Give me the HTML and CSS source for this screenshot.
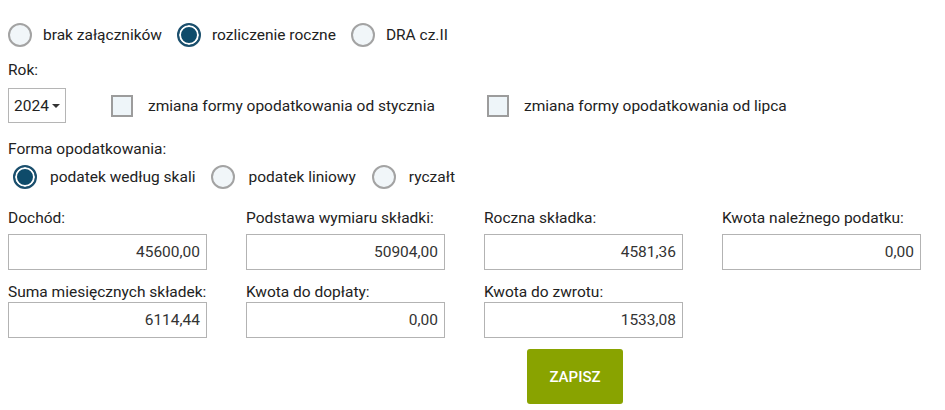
FILE: index.html
```html
<!DOCTYPE html>
<html>
    <head>
    <title>Rozliczenie roczne</title>
    <link rel="stylesheet" href="styles.css">
    </head>
    <body>
    <div id="form">
        <div class="choice-row top-row">
            <label class="choice"><span class="radio"></span>brak załączników</label>
            <label class="choice"><span class="radio on"></span>rozliczenie roczne</label>
            <label class="choice"><span class="radio"></span>DRA cz.II</label>
        </div>

        <div class="caption rok">Rok:</div>
        <div class="year-row">
            <div class="select">2024<span class="caret"></span></div>
            <label class="check first"><span class="box"></span>zmiana formy opodatkowania od stycznia</label>
            <label class="check"><span class="box"></span>zmiana formy opodatkowania od lipca</label>
        </div>

        <div class="caption forma">Forma opodatkowania:</div>
        <div class="choice-row tax-row">
            <label class="choice"><span class="radio on"></span>podatek według skali</label>
            <label class="choice"><span class="radio"></span>podatek liniowy</label>
            <label class="choice"><span class="radio"></span>ryczałt</label>
        </div>

        <div class="fields row1">
            <div class="field">
                <label>Dochód:</label>
                <div class="value">45600,00</div>
            </div>
            <div class="field">
                <label>Podstawa wymiaru składki:</label>
                <div class="value">50904,00</div>
            </div>
            <div class="field">
                <label>Roczna składka:</label>
                <div class="value">4581,36</div>
            </div>
            <div class="field">
                <label>Kwota należnego podatku:</label>
                <div class="value">0,00</div>
            </div>
        </div>
        <div class="fields row2">
            <div class="field">
                <label>Suma miesięcznych składek:</label>
                <div class="value">6114,44</div>
            </div>
            <div class="field">
                <label>Kwota do dopłaty:</label>
                <div class="value">0,00</div>
            </div>
            <div class="field">
                <label>Kwota do zwrotu:</label>
                <div class="value">1533,08</div>
            </div>
        </div>

        <div class="actions">
            <button class="save">ZAPISZ</button>
        </div>
    </div>
    </body>
</html>
```

FILE: styles.css
```css
body {
    margin: 0;
    font-family: Roboto, "Liberation Sans", sans-serif;
    font-size: 15.5px;
    color: #222;
    background: #fff;
}
#form {
    padding: 23px 8px 0 8px;
}
.choice-row {
    display: flex;
    align-items: center;
    height: 24px;
}
.choice {
    display: flex;
    align-items: center;
    margin-right: 15px;
}
.radio {
    box-sizing: border-box;
    width: 24px;
    height: 24px;
    border-radius: 50%;
    border: 2px solid #a3a3a3;
    background: #f1f6f9;
    margin-right: 11px;
}
.radio.on {
    border-color: #1b4f6d;
    background: #0e4b6a;
    box-shadow: inset 0 0 0 2px #fff;
}
.tax-row {
    margin-top: 7px;
    padding-left: 5px;
}
.tax-row .radio {
    margin-right: 13px;
}
.tax-row .choice {
    margin-right: 16px;
}
.caption {
    line-height: 18px;
}
.rok {
    margin-top: 14px;
}
.forma {
    margin-top: 17px;
}
.year-row {
    display: flex;
    align-items: center;
    margin-top: 9px;
    height: 35px;
}
.select {
    box-sizing: border-box;
    width: 58px;
    height: 35px;
    border: 1px solid #b5b5b5;
    padding-left: 5px;
    display: flex;
    align-items: center;
    color: #222;
}
.caret {
    width: 0;
    height: 0;
    border-left: 4px solid transparent;
    border-right: 4px solid transparent;
    border-top: 4px solid #333;
    margin-left: 3px;
}
.check {
    display: flex;
    align-items: center;
}
.check.first {
    margin-left: 45px;
    width: 376px;
}
.box {
    box-sizing: border-box;
    width: 22px;
    height: 22px;
    border: 2px solid #9c9c9c;
    background: #eef5f9;
    margin-right: 15px;
}
.fields {
    display: grid;
    grid-template-columns: repeat(4, 199px);
    column-gap: 39px;
}
.row1 {
    margin-top: 20px;
}
.row2 {
    margin-top: 13px;
}
.field label {
    display: block;
    line-height: 18px;
}
.row1 .field label {
    margin-bottom: 7px;
}
.row2 .field label {
    margin-bottom: 1px;
}
.value {
    box-sizing: border-box;
    height: 36px;
    border: 1px solid #b3b3b3;
    padding-right: 6px;
    text-align: right;
    line-height: 34px;
    color: #333;
}
.actions {
    margin-top: 11px;
    padding-left: 519px;
}
.save {
    width: 96px;
    height: 55px;
    border: none;
    border-radius: 3px;
    background: #89a300;
    color: #fff;
    font-family: Roboto, "Liberation Sans", sans-serif;
    font-size: 15px;
    font-weight: 500;
}
```
